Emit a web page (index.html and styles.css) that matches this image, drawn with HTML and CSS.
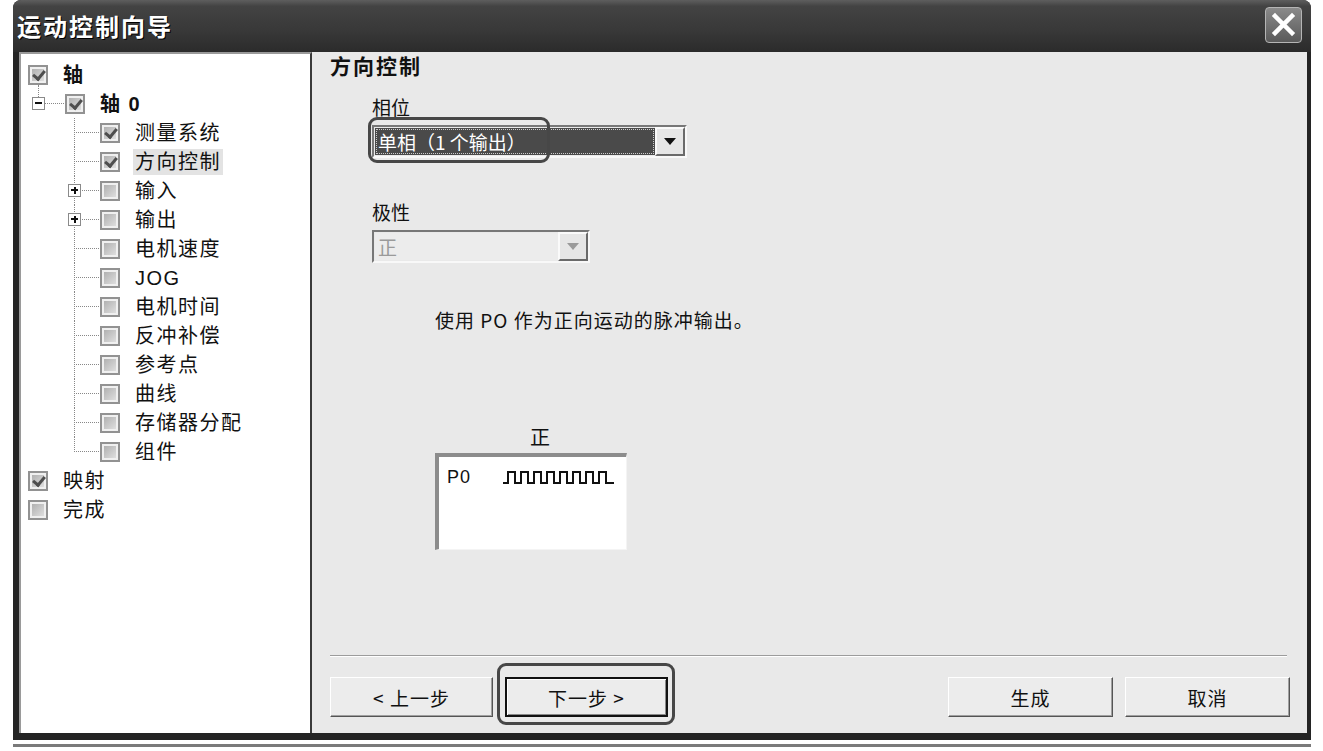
FILE: index.html
```html
<!DOCTYPE html>
<html>
<head>
<meta charset="utf-8">
<link rel="stylesheet" href="styles.css">
</head>
<body>

<div class="window">
  <div class="titlebar">
    <span class="title">运动控制向导</span>
    <div class="close">
      <svg width="25" height="25" viewBox="0 0 25 25"><path d="M4 4 L21 21 M21 4 L4 21" stroke="#fff" stroke-width="4.5" stroke-linecap="square"/></svg>
    </div>
  </div>

  <div class="client">
    <!-- wizard step tree -->
    <div class="tree">
      <div class="row lvl0"><span class="cb checked"></span><span class="label strong">轴</span></div>
      <div class="row lvl1"><span class="up"></span><span class="exp minus"></span><span class="hline"></span><span class="cb checked"></span><span class="label strong">轴 0</span></div>
      <div class="row lvl2"><span class="vline"></span><span class="hline"></span><span class="cb checked"></span><span class="label">测量系统</span></div>
      <div class="row lvl2"><span class="vline"></span><span class="hline"></span><span class="cb checked"></span><span class="label selected">方向控制</span></div>
      <div class="row lvl2"><span class="vline"></span><span class="hline"></span><span class="exp plus"></span><span class="cb"></span><span class="label">输入</span></div>
      <div class="row lvl2"><span class="vline"></span><span class="hline"></span><span class="exp plus"></span><span class="cb"></span><span class="label">输出</span></div>
      <div class="row lvl2"><span class="vline"></span><span class="hline"></span><span class="cb"></span><span class="label">电机速度</span></div>
      <div class="row lvl2"><span class="vline"></span><span class="hline"></span><span class="cb"></span><span class="label">JOG</span></div>
      <div class="row lvl2"><span class="vline"></span><span class="hline"></span><span class="cb"></span><span class="label">电机时间</span></div>
      <div class="row lvl2"><span class="vline"></span><span class="hline"></span><span class="cb"></span><span class="label">反冲补偿</span></div>
      <div class="row lvl2"><span class="vline"></span><span class="hline"></span><span class="cb"></span><span class="label">参考点</span></div>
      <div class="row lvl2"><span class="vline"></span><span class="hline"></span><span class="cb"></span><span class="label">曲线</span></div>
      <div class="row lvl2"><span class="vline"></span><span class="hline"></span><span class="cb"></span><span class="label">存储器分配</span></div>
      <div class="row lvl2 last"><span class="vline"></span><span class="hline"></span><span class="cb"></span><span class="label">组件</span></div>
      <div class="row lvl0"><span class="cb checked"></span><span class="label">映射</span></div>
      <div class="row lvl0"><span class="cb"></span><span class="label">完成</span></div>
    </div>

    <!-- page content -->
    <div class="pane">
      <div class="page-title">方向控制</div>

      <div class="field-label">相位</div>
      <div class="combo wide">
        <div class="combo-value">单相（1 个输出）</div>
        <div class="combo-btn"><span class="arrow"></span></div>
        <span class="mark mark-combo"></span>
      </div>

      <div class="field-label gap">极性</div>
      <div class="combo narrow disabled">
        <div class="combo-value">正</div>
        <div class="combo-btn"><span class="arrow"></span></div>
      </div>

      <div class="desc">使用 PO 作为正向运动的脉冲输出。</div>

      <div class="wave-label">正</div>
      <div class="wave-box">
        <div class="wave-row">
          <span class="pin">P0</span>
          <svg class="pulse" width="112" height="13" viewBox="0 0 112 13">
            <path d="M0 12 H5 V1 H12 V12 H18 V1 H25 V12 H31 V1 H38 V12 H44 V1 H51 V12 H57 V1 H64 V12 H70 V1 H77 V12 H83 V1 H90 V12 H96 V1 H103 V12 H111" fill="none" stroke="#111" stroke-width="2"/>
          </svg>
        </div>
      </div>

      <div class="footer">
        <div class="separator"></div>
        <div class="buttons">
          <div class="btn">&lt; 上一步</div>
          <div class="btn default">下一步 &gt;<span class="mark mark-btn"></span></div>
          <div class="btn push">生成</div>
          <div class="btn">取消</div>
        </div>
      </div>
    </div>
  </div>
</div>
<div class="underline"></div>

</body>
</html>
```

FILE: styles.css
```css
* {
  box-sizing: border-box;
}

body {
  margin: 0;
  background: #fff;
  font-family: "Liberation Sans", "Noto Sans CJK SC", sans-serif;
  color: #111;
}

/* Window frame */
.window {
  width: 1298px;
  margin-left: 13px;
  background: #242424;
  border-radius: 8px 8px 0 0;
  padding-bottom: 7px;
}

.titlebar {
  height: 52px;
  display: flex;
  align-items: center;
  justify-content: space-between;
  padding: 0 9px 0 4px;
  border-radius: 8px 8px 0 0;
  background: linear-gradient(#5e5e5e 0, #434343 12%, #383838 60%, #2b2b2b 100%);
}

.title {
  color: #fff;
  font-family: "Noto Sans CJK SC", sans-serif;
  font-size: 24px;
  font-weight: bold;
  letter-spacing: 2px;
  line-height: 28px;
  text-shadow: 1px 1px 0 #000;
}

.close {
  width: 37px;
  height: 36px;
  margin-top: -3px;
  display: flex;
  align-items: center;
  justify-content: center;
  border: 1px solid #b5b5b5;
  border-radius: 4px;
  background: linear-gradient(#8a8a8a, #5a5a5a);
}

.client {
  display: flex;
  height: 681px;
  margin: 0 4px 0 6px;
}

/* Tree */
.tree {
  width: 293px;
  background: #fff;
  border-left: 2px solid #9a9a9a;
  border-top: 2px solid #9a9a9a;
  border-right: 2px solid #3a3a3a;
  padding-top: 6px;
}

.row {
  position: relative;
  height: 29px;
  display: flex;
  align-items: center;
}

.lvl0 { padding-left: 7px; }
.lvl1 { padding-left: 44px; }
.lvl2 { padding-left: 79px; }

.cb {
  position: relative;
  width: 20px;
  height: 20px;
  border: 2px solid #929292;
  background: linear-gradient(135deg, #a9a9a9, #e6e6e6);
  box-shadow: inset 0 0 0 2px #f0f0f0;
  flex-shrink: 0;
}

.cb.checked::after {
  content: "";
  position: absolute;
  left: 5px;
  top: 1px;
  width: 5px;
  height: 9px;
  border-right: 3px solid #4e4e4e;
  border-bottom: 3px solid #4e4e4e;
  transform: rotate(40deg);
}

.label {
  margin-left: 13px;
  font-size: 20px;
  letter-spacing: 1.5px;
  line-height: 26px;
  padding: 0 2px;
  white-space: nowrap;
}

.label.strong {
  font-weight: bold;
}

.label.selected {
  background: #e3e3e3;
}

/* tree connector lines */
.vline {
  position: absolute;
  left: 53px;
  top: 0;
  height: 29px;
  border-left: 1px dotted #888;
}

.last .vline {
  height: 15px;
}

.hline {
  position: absolute;
  left: 53px;
  top: 14px;
  width: 25px;
  border-top: 1px dotted #888;
}

.lvl1 .hline {
  left: 23px;
  width: 20px;
}

.up {
  position: absolute;
  left: 17px;
  top: -4px;
  height: 12px;
  border-left: 1px dotted #888;
}

.exp {
  position: absolute;
  left: 11px;
  top: 8px;
  width: 13px;
  height: 13px;
  border: 1px solid #8a8a8a;
  background: #fff;
}

.lvl2 .exp {
  left: 47px;
}

.exp::before {
  content: "";
  position: absolute;
  left: 2px;
  top: 4px;
  width: 7px;
  height: 2px;
  background: #111;
}

.exp.plus::after {
  content: "";
  position: absolute;
  left: 4.5px;
  top: 1.5px;
  width: 2px;
  height: 7px;
  background: #111;
}

/* Right pane */
.pane {
  flex: 1;
  display: flex;
  flex-direction: column;
  background: #e9e9e9;
  padding: 0 17px 16px 18px;
  font-family: "Noto Sans CJK SC", sans-serif;
}

.page-title {
  margin-top: 1px;
  font-size: 21px;
  font-weight: bold;
  letter-spacing: 2px;
  line-height: 24px;
}

.field-label {
  margin: 18px 0 0 42px;
  font-size: 19px;
  line-height: 24px;
}

.field-label.gap {
  margin-top: 42px;
}

.combo {
  position: relative;
  display: flex;
  height: 33px;
  margin: 6px 0 0 42px;
  border: 2px solid;
  border-color: #777 #f8f8f8 #f8f8f8 #777;
}

.combo.wide { width: 315px; }
.combo.narrow { width: 218px; }

.combo-value {
  flex: 1;
  margin: 1px 0 1px 1px;
  padding-left: 3px;
  background: #4a4a4a;
  color: #fff;
  font-size: 19px;
  line-height: 27px;
  outline: 1px dotted #ccc;
  outline-offset: -2px;
}

.combo-btn {
  width: 30px;
  display: flex;
  align-items: center;
  justify-content: center;
  background: #e6e6e6;
  border: 2px solid;
  border-color: #fafafa #6a6a6a #6a6a6a #fafafa;
}

.arrow {
  width: 0;
  height: 0;
  border-left: 6px solid transparent;
  border-right: 6px solid transparent;
  border-top: 7px solid #111;
}

.disabled .combo-value {
  background: #ececec;
  color: #9a9a9a;
  outline: none;
}

.disabled .arrow {
  border-top-color: #9a9a9a;
}

.desc {
  margin: 45px 0 0 105px;
  font-size: 19px;
  letter-spacing: 1px;
  line-height: 24px;
}

.wave-label {
  margin: 93px 0 0 200px;
  font-size: 20px;
  line-height: 24px;
}

.wave-box {
  width: 192px;
  height: 97px;
  margin: 4px 0 0 105px;
  background: #fff;
  border-left: 4px solid #8c8c8c;
  border-top: 4px solid #8c8c8c;
  border-right: 1px solid #f4f4f4;
  border-bottom: 1px solid #f4f4f4;
}

.wave-row {
  display: flex;
  align-items: center;
  margin: 9px 0 0 8px;
  height: 22px;
}

.pin {
  font-family: "Liberation Sans", sans-serif;
  font-size: 18px;
  letter-spacing: 1px;
}

.pulse {
  margin-left: 32px;
}

/* Footer */
.footer {
  margin-top: auto;
}

.separator {
  height: 2px;
  margin-right: 3px;
  border-top: 1px solid #9c9c9c;
  border-bottom: 1px solid #fff;
}

.buttons {
  display: flex;
  gap: 12px;
  margin-top: 20px;
}

.btn {
  position: relative;
  width: 163px;
  height: 40px;
  display: flex;
  align-items: center;
  justify-content: center;
  background: #ececec;
  border: 1px solid;
  border-color: #fff #555 #555 #fff;
  box-shadow: inset -1px -1px 0 #a0a0a0;
  font-size: 19px;
  letter-spacing: 1px;
}

.btn.push {
  margin-left: auto;
}

.btn:nth-child(n+3) {
  width: 165px;
}

.btn.default {
  border: 2px solid #111;
  box-shadow: inset 1px 1px 0 #fff, inset -1px -1px 0 #888;
}

/* rounded annotation frames drawn over the screenshot */
.mark {
  position: absolute;
  border: 3px solid #474747;
  border-radius: 9px;
  pointer-events: none;
}

.mark-combo {
  left: -6px;
  top: -10px;
  width: 182px;
  height: 46px;
}

.mark-btn {
  left: -10px;
  top: -16px;
  right: -9px;
  bottom: -10px;
}

.underline {
  width: 1298px;
  height: 3px;
  margin: 4px 0 0 13px;
  background: #7a7a7a;
}
```
